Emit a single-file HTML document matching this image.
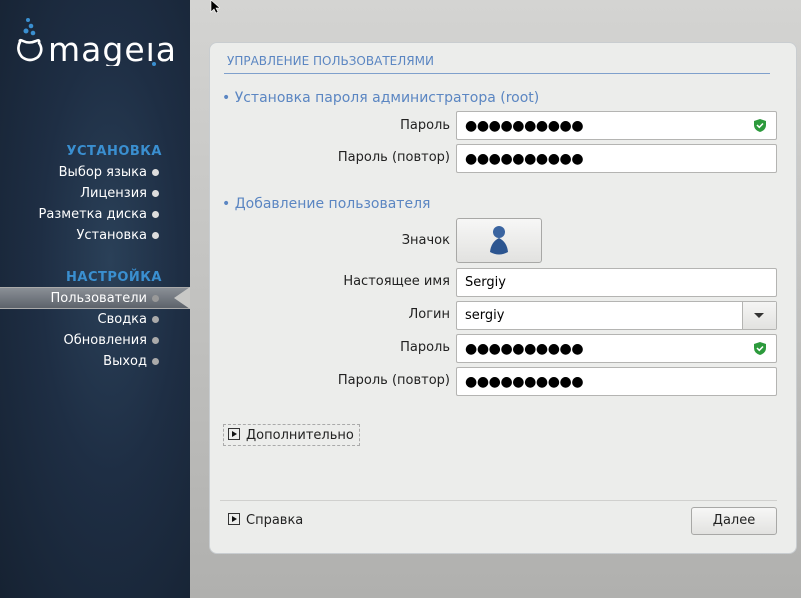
<!DOCTYPE html>
<html><head><meta charset="utf-8"><style>
*{margin:0;padding:0;box-sizing:border-box}
body{width:801px;height:598px;overflow:hidden;position:relative;font-family:"DejaVu Sans","Liberation Sans",sans-serif;font-size:13px;background:linear-gradient(#d4d4d2,#b0b0ae)}
#side{position:absolute;left:0;top:0;width:190px;height:598px;background:radial-gradient(ellipse at 110px 260px,#2a4058 0%,#1e2e44 45%,#162232 100%)}
.ab{position:absolute;white-space:nowrap}
.hd{color:#3a8fd0;font-weight:bold;font-size:13px;right:28px;letter-spacing:.5px}
.it{color:#fff;right:43px;font-size:13px}
.dot{position:absolute;left:152px;width:7px;height:7px;border-radius:50%;background:#ddd}
#panel{position:absolute;left:209px;top:42px;width:588px;height:512px;background:#ecedeb;border-radius:8px;border:1px solid #c9cdd0}
.lbl{position:absolute;right:346px;color:#222;font-size:13px}
.fld{position:absolute;left:246px;width:321px;height:29px;background:#fff;border:1px solid #b4b4b2;border-radius:2px;font-size:13px;padding:6px 8px;color:#000}
.pw{font-size:14px;letter-spacing:-0.4px;padding:1px 8px;line-height:26px}
.sec{position:absolute;left:12px;color:#5b86c2;font-size:14px}
.sh{position:absolute;right:10px;top:7px}
.btn{position:absolute;background:linear-gradient(#f7f7f6,#e2e2e0);border:1px solid #a8a8a6;border-radius:3px}
.exp{display:inline-block;width:12px;height:12px;border:1px solid #333;vertical-align:-1px;margin-right:6px;position:relative}
.exp:after{content:"";position:absolute;left:3px;top:2px;border-left:5px solid #111;border-top:3.5px solid transparent;border-bottom:3.5px solid transparent}
</style></head><body>
<div id="side">
<svg class="ab" style="left:14px;top:16px" width="170" height="50">
<circle cx="14" cy="4" r="2" fill="#3a8fd0"/><circle cx="17" cy="10" r="2.3" fill="#3a8fd0"/><circle cx="12" cy="15" r="2.5" fill="#3a8fd0"/><circle cx="19" cy="17" r="2.3" fill="#3a8fd0"/>
<path d="M6 26 Q5 23 9 25 Q15 28 22 25 Q26 23 25 27 Q30 34 24 41 Q16 47 8 41 Q2 34 6 26Z" fill="none" stroke="#fff" stroke-width="2.6"/>
<text x="34" y="45" fill="#fff" font-size="33" font-family="DejaVu Sans" letter-spacing="1">mageıa</text>
<circle cx="140" cy="48" r="2" fill="#3a8fd0"/>
</svg>
<div class="ab hd" style="top:144px">УСТАНОВКА</div>
<div class="ab it" style="top:165px">Выбор языка</div><div class="dot" style="top:169px"></div>
<div class="ab it" style="top:186px">Лицензия</div><div class="dot" style="top:190px"></div>
<div class="ab it" style="top:207px">Разметка диска</div><div class="dot" style="top:211px"></div>
<div class="ab it" style="top:228px">Установка</div><div class="dot" style="top:232px"></div>
<div class="ab hd" style="top:270px">НАСТРОЙКА</div>
<div class="ab" style="left:0;top:287px;width:190px;height:22px;background:linear-gradient(#8a8f96,#5d636b);border-top:1px solid #aaa;border-bottom:1px solid #aaa"></div>
<div class="ab" style="left:174px;top:287px;width:0;height:0;border-right:16px solid #c8c8c6;border-top:11px solid transparent;border-bottom:11px solid transparent"></div>
<div class="ab it" style="top:291px">Пользователи</div><div class="dot" style="top:295px;background:#999"></div>
<div class="ab it" style="top:312px">Сводка</div><div class="dot" style="top:316px;background:#aaa"></div>
<div class="ab it" style="top:333px">Обновления</div><div class="dot" style="top:337px;background:#aaa"></div>
<div class="ab it" style="top:354px">Выход</div><div class="dot" style="top:358px;background:#aaa"></div>
</div>
<div id="panel">
<div class="ab" style="left:17px;top:11px;color:#5b86c2;font-size:12px">УПРАВЛЕНИЕ ПОЛЬЗОВАТЕЛЯМИ</div>
<div class="ab" style="left:14px;top:30px;width:546px;height:1px;background:#7fa0cc"></div>
<div class="sec" style="top:47px">• Установка пароля администратора (root)</div>
<div class="lbl" style="top:75px">Пароль</div>
<div class="fld pw" style="top:68px">●●●●●●●●●●<svg class="sh" width="12" height="13" viewBox="0 0 12 13"><path d="M6 0L12 2V6Q12 11 6 13Q0 11 0 6V2Z" fill="#2c9a3c"/><path d="M3 6L5.3 8.3 9 4.5" stroke="#fff" stroke-width="1.5" fill="none"/></svg></div>
<div class="lbl" style="top:107px">Пароль (повтор)</div>
<div class="fld pw" style="top:101px">●●●●●●●●●●</div>
<div class="sec" style="top:153px">• Добавление пользователя</div>
<div class="lbl" style="top:190px">Значок</div>
<div class="btn" style="left:246px;top:175px;width:86px;height:45px"><svg style="position:absolute;left:32px;top:5px" width="20" height="33"><circle cx="10" cy="8" r="6" fill="#3a64a0"/><path d="M10 14Q2 18 1 28Q10 33 19 28Q18 18 10 14Z" fill="#2c5590"/></svg></div>
<div class="lbl" style="top:231px">Настоящее имя</div>
<div class="fld" style="top:225px">Sergiy</div>
<div class="lbl" style="top:264px">Логин</div>
<div class="fld" style="top:258px">sergiy<div class="ab" style="right:0;top:0;width:34px;height:27px;background:linear-gradient(#f5f5f4,#e2e2e0);border-left:1px solid #b4b4b2"><div class="ab" style="left:11px;top:11px;border-top:5px solid #333;border-left:5px solid transparent;border-right:5px solid transparent"></div></div></div>
<div class="lbl" style="top:297px">Пароль</div>
<div class="fld pw" style="top:291px">●●●●●●●●●●<svg class="sh" width="12" height="13" viewBox="0 0 12 13"><path d="M6 0L12 2V6Q12 11 6 13Q0 11 0 6V2Z" fill="#2c9a3c"/><path d="M3 6L5.3 8.3 9 4.5" stroke="#fff" stroke-width="1.5" fill="none"/></svg></div>
<div class="lbl" style="top:330px">Пароль (повтор)</div>
<div class="fld pw" style="top:324px">●●●●●●●●●●</div>
<div class="ab" style="left:13px;top:381px;width:137px;height:22px;border:1px dashed #aaa;padding:3px 4px;color:#222"><span class="exp"></span>Дополнительно</div>
<div class="ab" style="left:10px;top:457px;width:557px;height:1px;background:#d0d0ce"></div>
<div class="ab" style="left:18px;top:470px;color:#222"><span class="exp"></span>Справка</div>
<div class="btn" style="left:481px;top:464px;width:86px;height:28px;text-align:center;line-height:26px;color:#222">Далее</div>
</div>
<svg class="ab" style="left:210px;top:0" width="10" height="14"><path d="M1 0V12L4 9 6 13 8 12 6 8H10Z" fill="#000" stroke="#fff" stroke-width=".6"/></svg>
</body></html>
